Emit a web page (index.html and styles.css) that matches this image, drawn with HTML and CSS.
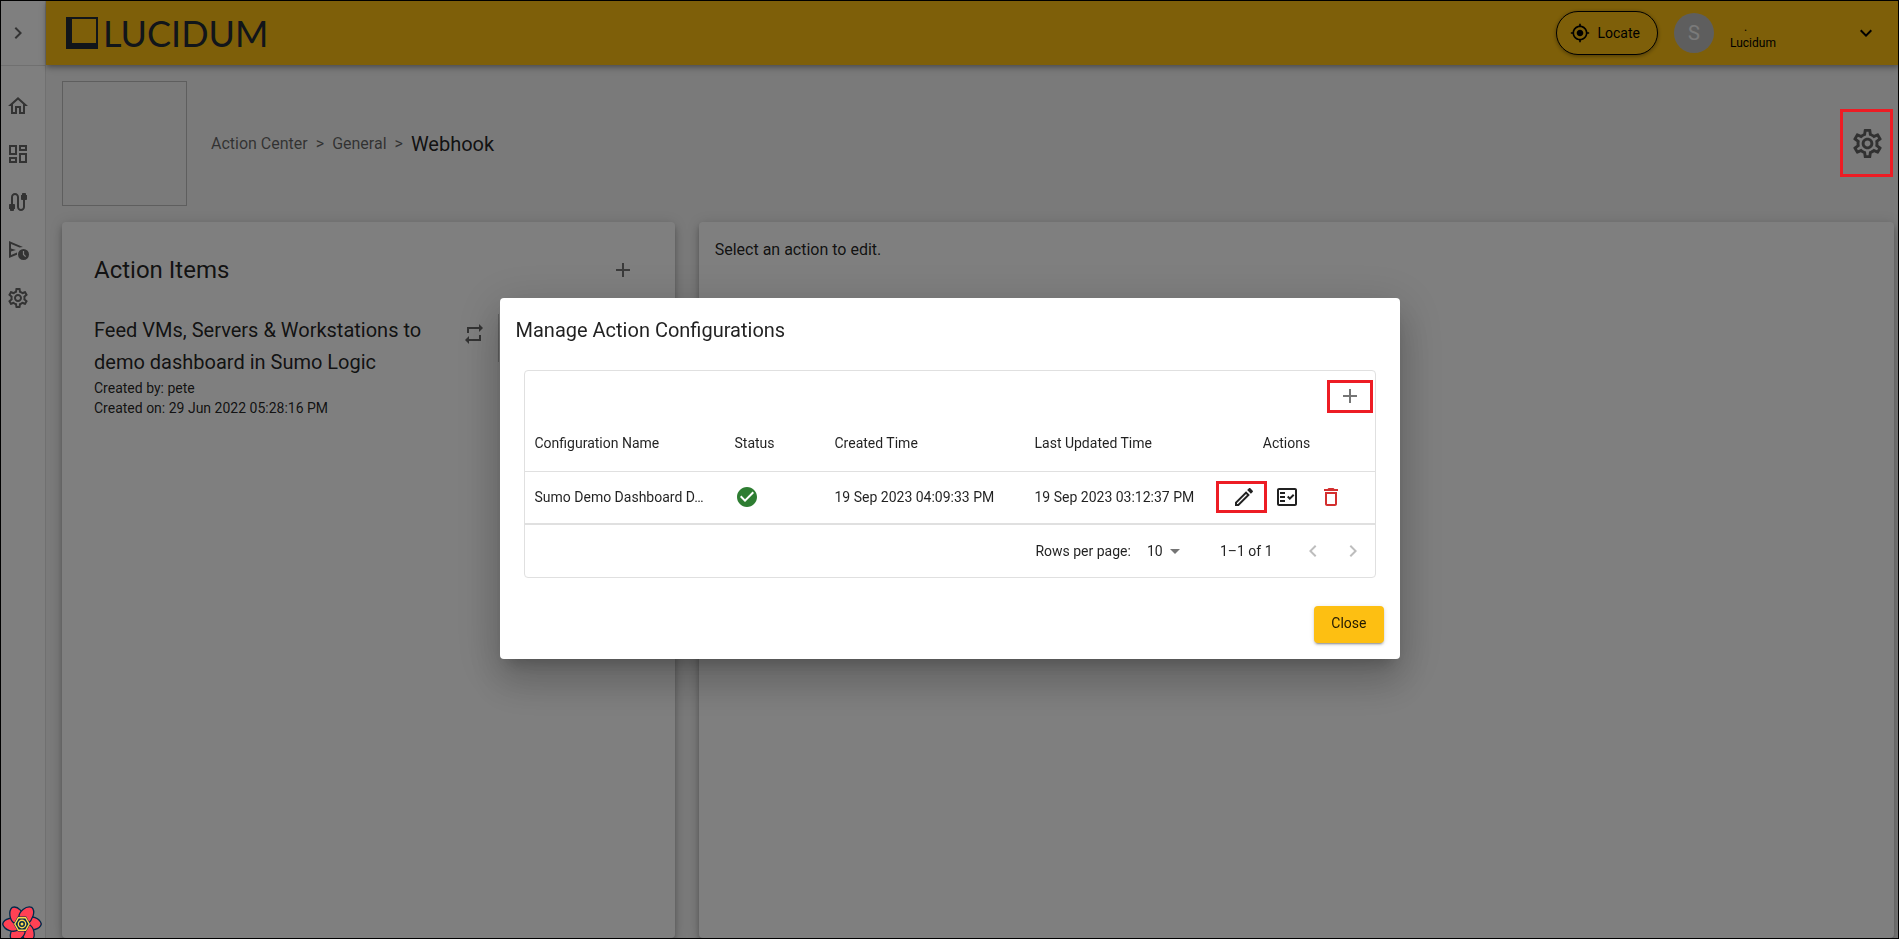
FILE: index.html
```html
<!DOCTYPE html>
<html lang="en">
<head>
<meta charset="utf-8">
<title>Lucidum - Webhook</title>
<link rel="stylesheet" href="styles.css">
</head>
<body>
<svg class="sprite" aria-hidden="true">
  <symbol id="i-gear" viewBox="0 0 24 24"><path d="M19.43 12.98c.04-.32.07-.64.07-.98 0-.34-.03-.66-.07-.98l2.11-1.65c.19-.15.24-.42.12-.64l-2-3.46c-.09-.16-.26-.25-.44-.25-.06 0-.12.01-.17.03l-2.49 1c-.52-.4-1.08-.73-1.69-.98l-.38-2.65C14.46 2.18 14.25 2 14 2h-4c-.25 0-.46.18-.49.42l-.38 2.65c-.61.25-1.17.59-1.69.98l-2.49-1c-.06-.02-.12-.03-.18-.03-.17 0-.34.09-.43.25l-2 3.46c-.13.22-.07.49.12.64l2.11 1.65c-.04.32-.07.65-.07.98 0 .33.03.66.07.98l-2.11 1.65c-.19.15-.24.42-.12.64l2 3.46c.09.16.26.25.44.25.06 0 .12-.01.17-.03l2.49-1c.52.4 1.08.73 1.69.98l.38 2.65c.03.24.24.42.49.42h4c.25 0 .46-.18.49-.42l.38-2.65c.61-.25 1.17-.59 1.69-.98l2.49 1c.06.02.12.03.18.03.17 0 .34-.09.43-.25l2-3.46c.12-.22.07-.49-.12-.64l-2.11-1.65zm-1.98-1.71c.04.31.05.52.05.73 0 .21-.02.43-.05.73l-.14 1.13.89.7 1.08.84-.7 1.21-1.27-.51-1.04-.42-.9.68c-.43.32-.84.56-1.25.73l-1.06.43-.16 1.13-.2 1.35h-1.4l-.19-1.35-.16-1.13-1.06-.43c-.43-.18-.83-.41-1.23-.71l-.91-.7-1.06.43-1.27.51-.7-1.21 1.08-.84.89-.7-.14-1.13c-.03-.31-.05-.54-.05-.74s.02-.43.05-.73l.14-1.13-.89-.7-1.08-.84.7-1.21 1.27.51 1.04.42.9-.68c.43-.32.84-.56 1.25-.73l1.06-.43.16-1.13.2-1.35h1.39l.19 1.35.16 1.13 1.06.43c.43.18.83.41 1.23.71l.91.7 1.06-.43 1.27-.51.7 1.21-1.07.85-.89.7.14 1.13zM12 8c-2.21 0-4 1.79-4 4s1.79 4 4 4 4-1.79 4-4-1.79-4-4-4zm0 6c-1.1 0-2-.9-2-2s.9-2 2-2 2 .9 2 2-.9 2-2 2z"/></symbol>
  <symbol id="i-plus" viewBox="0 0 24 24"><path d="M19 13h-6v6h-2v-6H5v-2h6V5h2v6h6v2z"/></symbol>
  <symbol id="i-right" viewBox="0 0 24 24"><path d="M10 6 8.59 7.41 13.17 12l-4.58 4.59L10 18l6-6z"/></symbol>
  <symbol id="i-left" viewBox="0 0 24 24"><path d="M15.41 7.41 14 6l-6 6 6 6 1.41-1.41L10.83 12z"/></symbol>
</svg>

<div class="app">
  <aside class="sidebar">
    <button class="side-toggle" aria-label="Expand menu"><svg class="icon"><use href="#i-right"/></svg></button>
    <nav class="side-nav">
      <a href="#" aria-label="Home"><svg class="icon" viewBox="0 0 24 24"><path d="m12 5.69 5 4.5V18h-2v-6H9v6H7v-7.81l5-4.5M12 3 2 12h3v8h6v-6h2v6h6v-8h3L12 3z"/></svg></a>
      <a href="#" aria-label="Dashboards"><svg class="icon" viewBox="0 0 24 24"><path d="M19 5v2h-4V5h4M9 5v6H5V5h4m10 8v6h-4v-6h4M9 17v2H5v-2h4M21 3h-8v6h8V3zM11 3H3v10h8V3zm10 8h-8v10h8V11zm-10 4H3v6h8v-6z"/></svg></a>
      <a href="#" aria-label="Connectors"><svg class="icon" viewBox="0 0 24 24"><path d="M20 5V4c0-.55-.45-1-1-1h-2c-.55 0-1 .45-1 1v1h-1v4c0 .55.45 1 1 1h1v7c0 1.1-.9 2-2 2s-2-.9-2-2V7c0-2.21-1.79-4-4-4S5 4.79 5 7v7H4c-.55 0-1 .45-1 1v4h1v1c0 .55.45 1 1 1h2c.55 0 1-.45 1-1v-1h1v-4c0-.55-.45-1-1-1H7V7c0-1.1.9-2 2-2s2 .9 2 2v10c0 2.21 1.79 4 4 4s4-1.79 4-4v-7h1c.55 0 1-.45 1-1V5h-1z"/></svg></a>
      <a href="#" aria-label="Action Center"><svg class="icon" viewBox="0 0 24 24"><path d="M17 9 3 3v17l8-3.300v-2.200L5 17v-3.500l5-1.500-5-1.500V6l8.500 3.600z"/><path fill-rule="evenodd" d="M17.500 11a5.500 5.500 0 1 0 0 11a5.500 5.500 0 0 0 0-11zm-.6 2h1.200v3.200l2 2-.9.900-2.300-2.400z"/></svg></a>
      <a href="#" aria-label="Settings"><svg class="icon"><use href="#i-gear"/></svg></a>
    </nav>
  </aside>

  <div class="page">
    <header class="topbar">
      <div class="logo"><span class="logo-mark"></span><span class="logo-text">LUCIDUM</span></div>
      <button class="locate"><svg class="icon icon-sm" viewBox="0 0 24 24"><path d="M12 8c-2.210 0-4 1.790-4 4s1.790 4 4 4 4-1.790 4-4-1.790-4-4-4zm8.940 3c-.46-4.170-3.770-7.480-7.940-7.940V1h-2v2.060C6.830 3.520 3.520 6.830 3.060 11H1v2h2.060c.46 4.170 3.770 7.480 7.940 7.940V23h2v-2.060c4.170-.46 7.480-3.770 7.940-7.940H23v-2h-2.060zM12 19c-3.870 0-7-3.130-7-7s3.130-7 7-7 7 3.130 7 7-3.130 7-7 7z"/></svg>Locate</button>
      <span class="avatar">S</span>
      <div class="account"><span class="account-name">.</span><span>Lucidum</span></div>
      <button class="account-toggle" aria-label="Account menu"><svg class="icon" viewBox="0 0 24 24"><path d="M16.590 8.590 12 13.170 7.410 8.590 6 10l6 6 6-6z"/></svg></button>
    </header>

    <main class="content">
      <div class="page-head">
        <div class="thumb"></div>
        <nav class="crumbs" aria-label="Breadcrumb">
          <a href="#">Action Center</a><span>&gt;</span><a href="#">General</a><span>&gt;</span><h1>Webhook</h1>
        </nav>
        <button class="manage marked" aria-label="Manage configurations"><svg class="icon"><use href="#i-gear"/></svg></button>
      </div>
      <div class="panels">
        <section class="panel items">
          <div class="items-head">
            <h2>Action Items</h2>
            <button class="icon-btn" aria-label="Add action"><svg class="icon"><use href="#i-plus"/></svg></button>
          </div>
          <article class="item">
            <div class="item-text">
              <h3>Feed VMs, Servers &amp; Workstations to demo dashboard in Sumo Logic</h3>
              <p>Created by: pete</p>
              <p>Created on: 29 Jun 2022 05:28:16 PM</p>
            </div>
            <svg class="icon item-repeat" viewBox="0 0 24 24"><path d="M7 7h10v3l4-4-4-4v3H5v6h2V7zm10 10H7v-3l-4 4 4 4v-3h12v-6h-2v4z"/></svg>
            <span class="item-rule"></span>
          </article>
        </section>
        <section class="panel editor">Select an action to edit.</section>
      </div>
    </main>
  </div>
</div>

<div class="backdrop">
  <div class="dialog" role="dialog" aria-labelledby="dialog-title">
    <h2 id="dialog-title">Manage Action Configurations</h2>
    <div class="grid">
      <div class="grid-tools"><button class="icon-btn marked add" aria-label="Add configuration"><svg class="icon"><use href="#i-plus"/></svg></button></div>
      <table>
        <colgroup><col class="c-name"><col class="c-status"><col class="c-time"><col class="c-time"><col></colgroup>
        <thead><tr><th>Configuration Name</th><th>Status</th><th>Created Time</th><th>Last Updated Time</th><th class="actions-head">Actions</th></tr></thead>
        <tbody><tr>
          <td>Sumo Demo Dashboard D…</td>
          <td><svg class="icon ok" viewBox="0 0 24 24" role="img" aria-label="OK"><path d="M12 2C6.480 2 2 6.480 2 12s4.480 10 10 10 10-4.480 10-10S17.520 2 12 2zm-2 15-5-5 1.410-1.410L10 14.170l7.590-7.590L19 8l-9 9z"/></svg></td>
          <td>19 Sep 2023 04:09:33 PM</td>
          <td>19 Sep 2023 03:12:37 PM</td>
          <td class="actions"><div class="actions-row">
            <button class="marked edit" aria-label="Edit"><svg class="icon" viewBox="0 0 24 24"><path d="M14.060 9.020l.92.92L5.920 19H5v-.92l9.060-9.060M17.660 3c-.25 0-.51.1-.7.290l-1.830 1.830 3.750 3.750 1.830-1.830c.39-.39.39-1.020 0-1.410l-2.340-2.340c-.2-.2-.45-.29-.71-.29zm-3.600 3.190L3 17.250V21h3.750L17.810 9.940l-3.750-3.750z"/></svg></button>
            <button aria-label="Test"><svg class="icon" viewBox="0 0 24 24"><path fill-rule="evenodd" d="M20 3H4c-1.100 0-2 .9-2 2v14c0 1.100.9 2 2 2h16c1.100 0 2-.9 2-2V5c0-1.100-.9-2-2-2zm0 16H4V5h16v14z"/><path d="M19.410 10.420 17.990 9l-3.170 3.170-1.410-1.420L12 12.160 14.820 15zM5 7h5v2H5zM5 11h5v2H5zM5 15h5v2H5z"/></svg></button>
            <button class="danger" aria-label="Delete"><svg class="icon" viewBox="0 0 24 24"><path d="M16 9v10H8V9h8m-1.500-6h-5l-1 1H5v2h14V4h-3.500l-1-1zM18 7H6v12c0 1.100.9 2 2 2h8c1.100 0 2-.9 2-2V7z"/></svg></button>
          </div></td>
        </tr></tbody>
      </table>
      <div class="pager">
        <label for="rows">Rows per page:</label>
        <div class="select-wrap">
          <select id="rows"><option>10</option><option>25</option></select>
          <svg class="icon caret" viewBox="0 0 24 24"><path d="m7 10 5 5 5-5z"/></svg>
        </div>
        <span class="range">1–1 of 1</span>
        <button disabled aria-label="Previous page"><svg class="icon"><use href="#i-left"/></svg></button>
        <button disabled aria-label="Next page"><svg class="icon"><use href="#i-right"/></svg></button>
      </div>
    </div>
    <div class="dialog-foot"><button class="close">Close</button></div>
  </div>
</div>

<button class="devtools" aria-label="Open query devtools">
  <svg viewBox="0 0 40 40">
    <g fill="#ff4154" stroke="#00294b" stroke-width="1.300">
      <path id="petal" d="M24 14C29 11 38 14 39.300 20C38 26 29 27 22 25z"/>
      <use href="#petal" transform="rotate(60 20 20)"/>
      <use href="#petal" transform="rotate(120 20 20)"/>
      <use href="#petal" transform="rotate(180 20 20)"/>
      <use href="#petal" transform="rotate(240 20 20)"/>
      <use href="#petal" transform="rotate(300 20 20)"/>
    </g>
    <path fill="#00294b" d="M15.800 12.500h8.400L28.500 20l-4.300 7.500h-8.400L11.500 20z"/>
    <g fill="none" stroke="#ffd94c" stroke-width="1.400">
      <path d="M16.400 13.700h7.200L27.200 20l-3.600 6.300h-7.200L12.800 20z"/>
      <circle cx="20" cy="20" r="3.700"/>
    </g>
    <circle cx="20" cy="20" r="1.500" fill="#ffd94c"/>
  </svg>
</button>
</body>
</html>
```

FILE: styles.css
```css
* { box-sizing: border-box; }

body {
  margin: 0;
  height: 100vh;
  overflow: hidden;
  background: #f4f4f4;
  color: rgba(0, 0, 0, 0.87);
  font: 400 14px/20px Roboto, sans-serif;
}

/* window frame, drawn above every layer */
body::after {
  content: "";
  position: fixed;
  inset: 0;
  border: 1px solid #000;
  z-index: 50;
  pointer-events: none;
}

h1, h2, h3, p { margin: 0; font-weight: inherit; }
a { color: inherit; text-decoration: none; }

button {
  display: flex;
  align-items: center;
  justify-content: center;
  padding: 0;
  border: 0;
  background: none;
  color: inherit;
  font: inherit;
}

.sprite { display: none; }
.icon { display: block; flex: none; width: 24px; height: 24px; fill: currentColor; }
.icon-sm { width: 20px; height: 20px; }
.icon-btn { width: 40px; height: 40px; color: rgba(0, 0, 0, 0.54); }

/* red callout frame around a control */
.marked { position: relative; }
.marked::after {
  content: "";
  position: absolute;
  border: 3px solid #ed1c24;
  z-index: 30;
}

.app { display: flex; height: 100%; }

.sidebar {
  flex: none;
  width: 46px;
  background: #fff;
  border-right: 1px solid #e0e0e0;
  color: rgba(0, 0, 0, 0.6);
}
.side-toggle {
  width: 100%;
  height: 66px;
  padding-right: 9px;
  border-bottom: 1px solid #e0e0e0;
}
.side-nav { display: flex; flex-direction: column; padding: 16px 6px; }
.side-nav a { display: flex; align-items: center; height: 48px; }

.page { flex: 1; min-width: 0; display: flex; flex-direction: column; }

.topbar {
  display: flex;
  align-items: center;
  flex: none;
  height: 65px;
  padding: 0 21px 0 20px;
  background: #fdbf12;
  color: #000;
  box-shadow: 0 2px 4px -1px rgba(0, 0, 0, 0.2), 0 4px 5px rgba(0, 0, 0, 0.14), 0 1px 10px rgba(0, 0, 0, 0.12);
}
.logo { display: flex; align-items: center; gap: 5px; margin-right: auto; color: #222a35; }
.logo-mark {
  width: 32px;
  height: 32px;
  border: solid #222a35;
  border-width: 2px 2px 6px 6px;
}
.logo-text { font: 400 36px/40px Lato, sans-serif; }
.locate {
  gap: 8px;
  height: 44px;
  padding: 0 17px 0 13px;
  border: 1px solid #000;
  border-radius: 22px;
  background: #fdbf12;
  box-shadow: 0 1px 4px rgba(0, 0, 0, 0.4);
}
.avatar {
  display: flex;
  align-items: center;
  justify-content: center;
  width: 40px;
  height: 40px;
  margin: 0 16px;
  border-radius: 50%;
  background: #bdbdbd;
  color: #f5f5f5;
  font-size: 20px;
}
.account { display: flex; flex-direction: column; width: 124px; font-size: 12px; line-height: 16px; padding-top: 4px; }
.account-name { padding-left: 14px; }
.account-toggle { width: 24px; height: 24px; }

.content { flex: 1; display: flex; flex-direction: column; gap: 16px; padding: 16px 5px 1px 16px; min-height: 0; }
.page-head { display: flex; align-items: center; }
.thumb { width: 125px; height: 125px; border: 1px solid #bdbdbd; }
.crumbs {
  display: flex;
  align-items: center;
  gap: 8px;
  margin: 0 auto 0 24px;
  color: rgba(0, 0, 0, 0.6);
  font-size: 16px;
}
.crumbs h1 { color: rgba(0, 0, 0, 0.87); font-size: 20px; }
.manage { width: 54px; height: 68px; color: rgba(0, 0, 0, 0.6); }
.manage .icon { width: 35px; height: 35px; }
.manage::after { inset: -1px 1px 1px 0; }

.panels { flex: 1; display: grid; grid-template-columns: 61fr 119fr; gap: 24px; }
.panel {
  background: #fff;
  border-radius: 4px;
  box-shadow: 0 3px 5px -1px rgba(0, 0, 0, 0.2), 0 5px 8px rgba(0, 0, 0, 0.14), 0 1px 14px rgba(0, 0, 0, 0.12);
}
.items { padding: 28px 32px; }
.items-head { display: flex; align-items: center; justify-content: space-between; }
.items-head h2 { font-size: 24px; line-height: 32px; }
.item { display: flex; margin-top: 24px; }
.item-text { width: 366px; }
.item h3 { font-size: 20px; line-height: 32px; }
.item-repeat { margin: 8px 12px 0 2px; color: rgba(0, 0, 0, 0.6); }
.item-rule { width: 1px; height: 48px; background: #c4c4c4; }
.editor { padding: 18px 16px; font-size: 16px; }

.backdrop {
  position: fixed;
  inset: 0;
  z-index: 20;
  display: flex;
  align-items: center;
  justify-content: center;
  padding-top: 18px;
  background: rgba(0, 0, 0, 0.5);
}
.dialog {
  width: 900px;
  padding: 16px;
  background: #fff;
  border-radius: 4px;
  box-shadow: 0 11px 15px -7px rgba(0, 0, 0, 0.2), 0 24px 38px 3px rgba(0, 0, 0, 0.14), 0 9px 46px 8px rgba(0, 0, 0, 0.12);
}
.dialog h2 { font-size: 20px; line-height: 32px; }
.grid { margin: 24px 8px 28px; border: 1px solid #e0e0e0; border-radius: 4px; }
.grid-tools { display: flex; justify-content: flex-end; height: 45px; padding: 5px 5px 0 0; }
.add::after { inset: 4px -3px 3px -3px; }

table { width: 100%; table-layout: fixed; border-collapse: collapse; }
.c-name, .c-time { width: 200px; }
.c-status { width: 100px; }
th, td {
  padding: 0 10px;
  font-weight: 400;
  text-align: left;
  white-space: nowrap;
}
th { height: 55px; border-bottom: 1px solid #e0e0e0; }
td { height: 53px; border-bottom: 2px solid #e0e0e0; }
.actions-head { padding: 0 26px 0 0; text-align: center; }
.ok { color: #2e7d32; }
.actions { padding: 0 32px 0 7px; }
.actions-row { display: flex; justify-content: space-between; }
.edit::after { inset: -4px -11px -4px -16px; }
.danger { color: #d32f2f; }

.pager { display: flex; align-items: center; justify-content: flex-end; height: 52px; padding-right: 2px; }
.select-wrap { display: flex; align-items: center; margin: 0 33px 0 16px; }
.select-wrap select {
  width: 16px;
  padding: 0;
  border: 0;
  background: none;
  appearance: none;
  color: inherit;
  font: inherit;
}
.caret { color: rgba(0, 0, 0, 0.54); }
.range { margin-right: 20px; }
.pager button { width: 40px; height: 40px; color: rgba(0, 0, 0, 0.26); }

.dialog-foot { display: flex; justify-content: flex-end; }
.close {
  height: 37px;
  padding: 0 17px 3px;
  border-radius: 4px;
  background: #fdbf12;
  box-shadow: 0 3px 1px -2px rgba(0, 0, 0, 0.2), 0 2px 2px rgba(0, 0, 0, 0.14), 0 1px 5px rgba(0, 0, 0, 0.12);
}

.devtools { position: fixed; left: 2px; bottom: -5px; z-index: 40; }
.devtools svg { display: block; width: 40px; height: 40px; }
```
